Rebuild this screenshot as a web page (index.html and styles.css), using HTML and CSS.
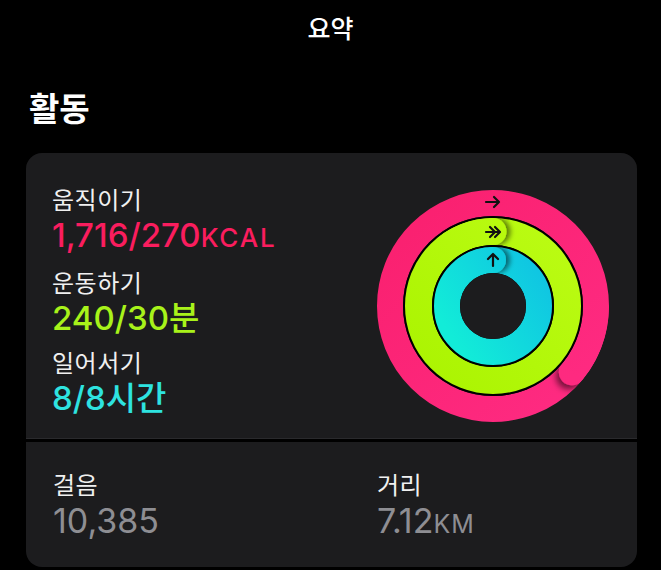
FILE: index.html
```html
<!DOCTYPE html>
<html lang="ko">
<head>
<meta charset="utf-8">
<title>요약</title>
<link rel="stylesheet" href="styles.css">
</head>
<body>
<header class="topbar">요약</header>
<h1 class="section-title">활동</h1>
<section class="card">
  <div class="card-top">
    <div class="metrics">
      <div class="metric">
        <div class="label">움직이기</div>
        <div class="value move">1,716/270<span class="unit unit-wide">KCAL</span></div>
      </div>
      <div class="metric">
        <div class="label">운동하기</div>
        <div class="value exercise">240/30분</div>
      </div>
      <div class="metric">
        <div class="label">일어서기</div>
        <div class="value stand">8/8시간</div>
      </div>
    </div>
    <svg class="rings" width="232" height="232" viewBox="0 0 232 232">
      <defs>
        <linearGradient id="gPink" x1="0" y1="0" x2="232" y2="232" gradientUnits="userSpaceOnUse">
          <stop offset="0" stop-color="#f91f6d"/>
          <stop offset="1" stop-color="#ff2c84"/>
        </linearGradient>
        <linearGradient id="gGreen" x1="40" y1="200" x2="200" y2="40" gradientUnits="userSpaceOnUse">
          <stop offset="0" stop-color="#aaf300"/>
          <stop offset="1" stop-color="#bcfc14"/>
        </linearGradient>
        <linearGradient id="gCyan" x1="70" y1="140" x2="160" y2="80" gradientUnits="userSpaceOnUse">
          <stop offset="0" stop-color="#12ecd8"/>
          <stop offset="1" stop-color="#10c6e2"/>
        </linearGradient>
        <filter id="capShadowPink" x="-100%" y="-100%" width="300%" height="300%">
          <feDropShadow dx="-3" dy="4" stdDeviation="3" flood-color="#000" flood-opacity="0.55"/>
        </filter>
        <filter id="capShadowRight" x="-100%" y="-100%" width="300%" height="300%">
          <feDropShadow dx="4" dy="0" stdDeviation="2.5" flood-color="#000" flood-opacity="0.5"/>
        </filter>
        <clipPath id="clipPink"><path clip-rule="evenodd" d="M116,0 a116,116 0 1 0 0.01,0 Z M116,26 a90,90 0 1 0 0.01,0 Z"/></clipPath>
        <clipPath id="clipGreen"><path clip-rule="evenodd" d="M116,28 a88,88 0 1 0 0.01,0 Z M116,55 a61,61 0 1 0 0.01,0 Z"/></clipPath>
        <clipPath id="clipCyan"><path clip-rule="evenodd" d="M116,57 a59,59 0 1 0 0.01,0 Z M116,83 a33,33 0 1 0 0.01,0 Z"/></clipPath>
      </defs>

      <circle cx="116" cy="116" r="103" fill="none" stroke="url(#gPink)" stroke-width="26"/>
      <g clip-path="url(#clipPink)">
        <circle cx="194.9" cy="182.2" r="13" fill="url(#gPink)" filter="url(#capShadowPink)"/>
        <path d="M219,116 A103,103 0 0 1 194.9,182.2" fill="none" stroke="url(#gPink)" stroke-width="26"/>
      </g>

      <circle cx="116" cy="116" r="90" fill="#000"/>
      <circle cx="116" cy="116" r="74.5" fill="none" stroke="url(#gGreen)" stroke-width="27"/>
      <g clip-path="url(#clipGreen)">
        <circle cx="116" cy="41.5" r="13.5" fill="url(#gGreen)" filter="url(#capShadowRight)"/>
        <path d="M68.1,58.9 A74.5,74.5 0 0 1 116,41.5" fill="none" stroke="url(#gGreen)" stroke-width="27"/>
      </g>

      <circle cx="116" cy="116" r="61" fill="#000"/>
      <circle cx="116" cy="116" r="46" fill="none" stroke="url(#gCyan)" stroke-width="26"/>
      <g clip-path="url(#clipCyan)">
        <circle cx="116" cy="70" r="13" fill="url(#gCyan)" filter="url(#capShadowRight)"/>
        <path d="M86.4,80.8 A46,46 0 0 1 116,70" fill="none" stroke="url(#gCyan)" stroke-width="26"/>
      </g>
      <circle cx="116" cy="116" r="33" fill="#1c1c1e"/>

      <g fill="none" stroke="#111" stroke-width="2.2" stroke-linecap="round" stroke-linejoin="round">
        <path d="M109,12 H122 M117,7 L122,12 L117,17"/>
        <path d="M109,42 H122 M113,37 L118,42 L113,47 M118,37 L123,42 L118,47"/>
        <path d="M116,76 V64 M111,69 L116,64 L121,69"/>
      </g>
    </svg>
  </div>
  <div class="card-bottom">
    <div class="stat">
      <div class="label">걸음</div>
      <div class="value muted">10,385</div>
    </div>
    <div class="stat">
      <div class="label">거리</div>
      <div class="value muted">7.12<span class="unit">KM</span></div>
    </div>
  </div>
</section>
</body>
</html>
```

FILE: styles.css
```css
html, body {
  margin: 0;
  padding: 0;
  background: #000;
}

body {
  width: 661px;
  height: 570px;
  overflow: hidden;
  color: #fff;
  font-family: Inter, "Noto Sans CJK KR", sans-serif;
}

.topbar {
  font-family: "Noto Sans CJK KR", sans-serif;
  font-size: 25px;
  line-height: 30px;
  font-weight: 500;
  text-align: center;
  padding-top: 12px;
  color: #fff;
}

.section-title {
  margin: 0;
  padding: 45px 0 0 29px;
  font-family: "Noto Sans CJK KR", sans-serif;
  font-size: 33px;
  line-height: 40px;
  font-weight: 700;
  color: #fff;
}

.card {
  margin: 26px 0 0 26px;
  width: 611px;
  display: flex;
  flex-direction: column;
  gap: 3px;
}

.card-top {
  background: #1c1c1e;
  border-radius: 16px 16px 0 0;
  box-shadow: inset 0 -1px 0 #2a2a2d;
  display: flex;
  justify-content: space-between;
  align-items: flex-start;
  padding: 34px 28px 17px 26px;
}

.metrics {
  display: flex;
  flex-direction: column;
  gap: 14px;
}

.label {
  font-family: Inter, "Noto Sans CJK KR", sans-serif;
  font-size: 24px;
  line-height: 28px;
  font-weight: 400;
  letter-spacing: 0.5px;
  color: #f0f0f0;
}

.value {
  margin-top: 2px;
  font-size: 33px;
  line-height: 36px;
  font-weight: 500;
}

.unit {
  font-size: 25px;
  letter-spacing: 1px;
}

.unit-wide {
  font-size: 26px;
  letter-spacing: 1.8px;
}

.move { color: #fa1d5e; }
.exercise { color: #a8f21a; }
.stand { color: #2ee3e0; }
.muted { color: #8e8e93; font-weight: 400; }

.rings {
  display: block;
  margin-top: 3px;
  flex: none;
}

.card-bottom {
  background: #1c1c1e;
  border-radius: 0 0 16px 16px;
  height: 125px;
  box-sizing: border-box;
  padding: 30px 0 0 27px;
  display: grid;
  grid-template-columns: 324px 1fr;
  align-content: start;
}

.card-bottom .value {
  margin-top: 3px;
  font-size: 34px;
}
```
